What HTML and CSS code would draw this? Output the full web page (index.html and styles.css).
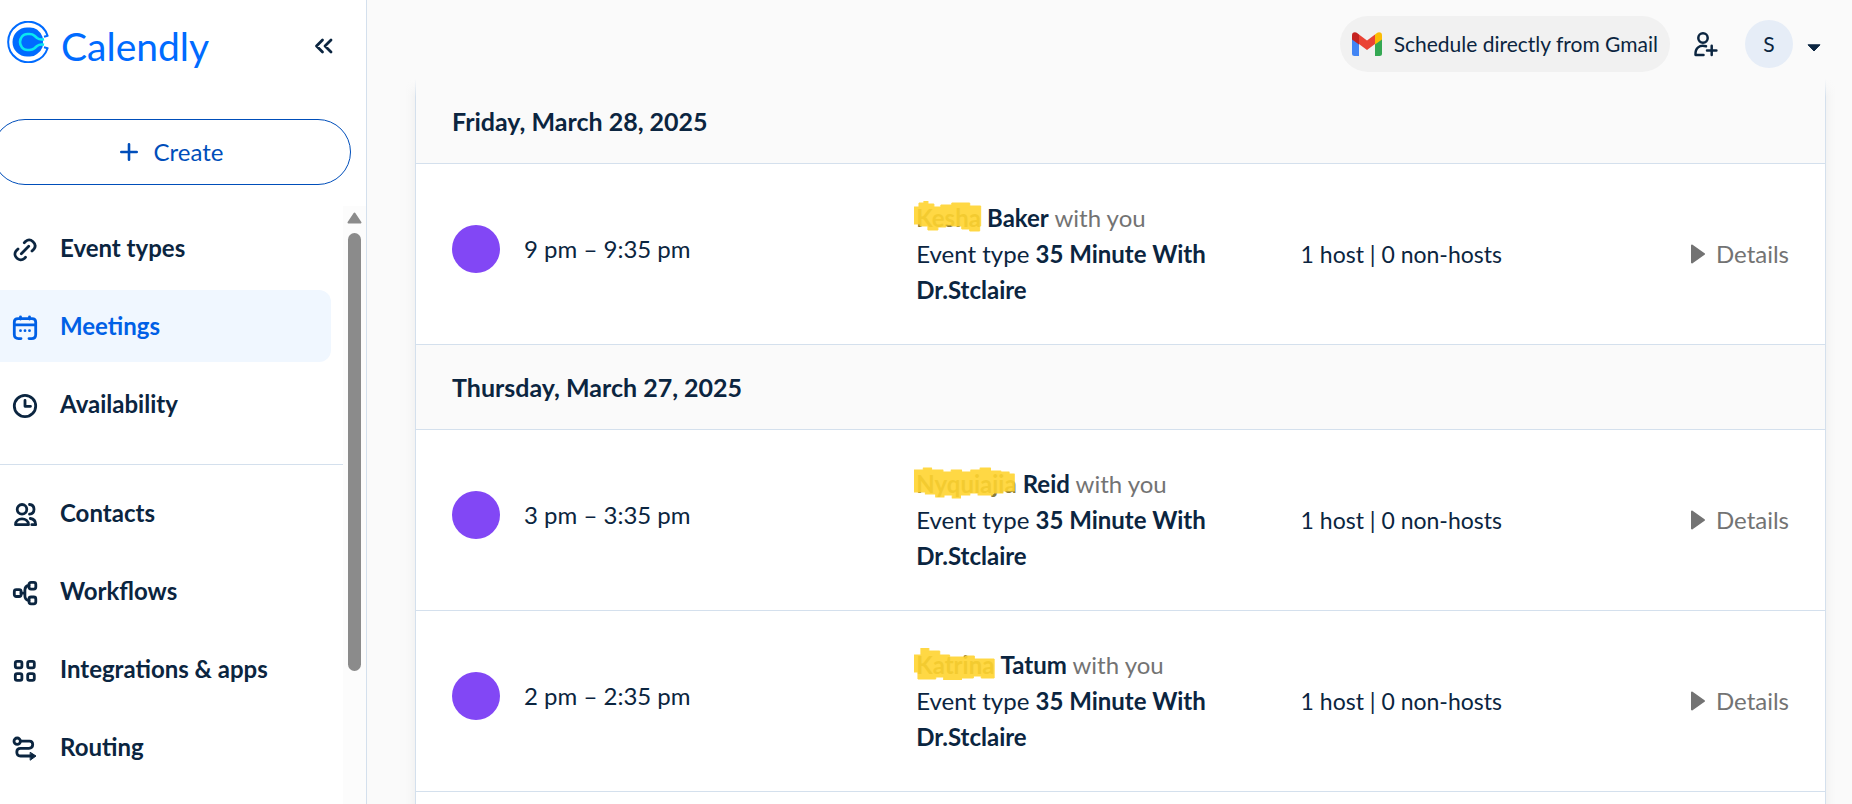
FILE: index.html
```html
<!DOCTYPE html>
<html lang="en">
<head>
<meta charset="utf-8">
<title>Meetings - Calendly</title>
<link rel="stylesheet" href="styles.css">
</head>
<body>
<div class="app">
  <aside class="sidebar">
    <div class="brand">
      <a class="logo" href="#">
        <svg class="logo-mark" viewBox="0 0 42 42" fill="none">
          <path d="M37 15.800L40.600 14.800A20.200 20.200 0 1 0 40.600 27.200L37 26.200" stroke="#006bff" stroke-width="2" stroke-linejoin="round"/>
          <path d="M30 8.500Q34 11.500 35.600 16L36 21L35.600 26Q34 30.500 30 33Q27 35.600 23 35.600H20A14.300 14.300 0 0 1 20 6.600H23Q27 6.600 30 8.500Z" fill="#006bff"/>
          <path d="M37 18.200Q33 19.200 30 17L27.500 14.700Q25.500 13 22.500 13H20.500Q17 13 15 15.500Q13 18 13 21Q13 24 15 26.500Q17 29 20.500 29H22.500Q25.500 29 27.500 27.300L30 25Q33 22.800 37 23.800" stroke="#0ae8f0" stroke-width="2.600"/>
          <path d="M38 21H42" stroke="#fff" stroke-width="3"/>
        </svg>
        <span class="logo-text">Calendly</span>
      </a>
      <button class="icon-button" type="button" aria-label="Collapse sidebar">
        <svg width="20" height="18" viewBox="0 0 20 18" fill="none" stroke="currentColor" stroke-width="2.800" stroke-linecap="round" stroke-linejoin="round"><path d="M8.500 3L2.500 9L8.500 15M17 3L11 9L17 15"/></svg>
      </button>
    </div>
    <button class="create" type="button">
      <svg width="18" height="18" viewBox="0 0 18 18" stroke="currentColor" stroke-width="2.600" stroke-linecap="round"><path d="M9 1.300V16.700M1.300 9H16.700"/></svg>
      Create
    </button>
    <div class="nav-area">
      <nav class="nav">
        <ul class="nav-group">
          <li><a class="nav-item" href="#">
            <svg class="nav-icon" viewBox="0 0 26 26"><path d="M9.300 16.700L16.700 9.300M12.300 5.700L13.700 4.300C18.500 .3 25.700 6.800 22 12L20 14M6 12L4 14C.3 19.200 7.500 25.700 12.300 21.500L13.500 20.300"/></svg>
            Event types</a></li>
          <li><a class="nav-item nav-item-active" href="#" aria-current="page">
            <svg class="nav-icon" viewBox="0 0 26 26"><path d="M9 23.600H6.500Q2.300 23.600 2.300 19.500V7Q2.300 3.600 6 3.600H20Q23.700 3.600 23.700 7V19.500Q23.700 23.600 19.500 23.600H17M2.300 9.800H23.700M8.500 1.800V4M17.500 1.800V4"/><path d="M8.500 15.700H8.510M13 15.700H13.010M17.500 15.700H17.510"/></svg>
            Meetings</a></li>
          <li><a class="nav-item" href="#">
            <svg class="nav-icon" viewBox="0 0 26 26"><circle cx="13" cy="13" r="10.700"/><path d="M13 7.500V13.300H18.500"/></svg>
            Availability</a></li>
        </ul>
        <ul class="nav-group">
          <li><a class="nav-item" href="#">
            <svg class="nav-icon" viewBox="0 0 26 26"><circle cx="10" cy="7.300" r="4.800"/><path d="M3.500 22.700C3.500 14.800 16.500 14.800 16.500 22.700ZM17.500 2.500C23.500 3 23.500 11.500 17.500 12.200M18.300 16.500Q23.600 17 23.700 22.700H19.800"/></svg>
            Contacts</a></li>
          <li><a class="nav-item" href="#">
            <svg class="nav-icon" viewBox="0 0 26 26"><rect x="2.300" y="9.700" width="6.800" height="6.800" rx="2"/><rect x="17" y="2.300" width="6.800" height="6.800" rx="2"/><rect x="17" y="17" width="6.800" height="6.800" rx="2"/><path d="M9 13.100H13M17 5.500Q13 6 12.900 10V16Q13 20 17 20.500"/></svg>
            Workflows</a></li>
          <li><a class="nav-item" href="#">
            <svg class="nav-icon" viewBox="0 0 26 26"><rect x="3.300" y="3.300" width="6.600" height="6.600" rx="1.800"/><rect x="15.700" y="3.300" width="6.600" height="6.600" rx="1.800"/><rect x="3.300" y="15.700" width="6.600" height="6.600" rx="1.800"/><rect x="15.700" y="15.700" width="6.600" height="6.600" rx="1.800"/></svg>
            Integrations &amp; apps</a></li>
          <li><a class="nav-item" href="#">
            <svg class="nav-icon" viewBox="0 0 26 26"><circle cx="5.200" cy="5.200" r="3.200"/><path d="M8.500 5.200H17.500Q20.700 5.200 20.700 8.500Q20.700 12.300 17 12.300H8.500Q4.800 12.300 4.800 16Q4.800 20 8.500 20H18"/><path class="solid" d="M18.500 16.500L24 20L18.500 24Z"/></svg>
            Routing</a></li>
        </ul>
      </nav>
      <div class="scrollbar" aria-hidden="true">
        <svg width="15" height="12" viewBox="0 0 15 12"><path d="M7.500 1.500L13.500 10.500H1.500Z" fill="#8b8b8b" stroke="#8b8b8b" stroke-width="2" stroke-linejoin="round"/></svg>
        <div class="scroll-thumb"></div>
      </div>
    </div>
  </aside>

  <div class="content">
    <header class="topbar">
      <button class="gmail" type="button">
        <svg width="30" height="24" viewBox="0 0 30 24"><path d="M0 6V21.500Q0 24 2.500 24H7V10Z" fill="#4285f4"/><path d="M30 6V21.500Q30 24 27.500 24H23V10Z" fill="#34a853"/><path d="M0 3.500Q0 .3 3 .3Q4.500 .3 7 2.500V12.500L0 7.500Z" fill="#c5221f"/><path d="M30 3.500Q30 .3 27 .3Q25.500 .3 23 2.500V12.500L30 7.500Z" fill="#fbbc04"/><path d="M7 2.500L15 8.500L23 2.500V12L15 18L7 12Z" fill="#ea4335"/></svg>
        Schedule directly from Gmail
      </button>
      <button class="icon-button" type="button" aria-label="Invite user">
        <svg width="26" height="28" viewBox="0 0 26 28" fill="none" stroke="currentColor" stroke-width="2.500" stroke-linejoin="round" stroke-linecap="round"><circle cx="10" cy="8" r="4.700"/><path d="M10.500 25H2.500C2 18 6.500 14.500 13 16.300M18.700 15.700V25M14 20.400H23.400"/></svg>
      </button>
      <button class="account" type="button" aria-label="Account menu">
        <span class="avatar">S</span>
        <svg width="14" height="8" viewBox="0 0 14 8"><path d="M1 .8H13L7 7Z" fill="currentColor" stroke="currentColor" stroke-linejoin="round"/></svg>
      </button>
    </header>

    <main class="meetings">
      <h2 class="day">Friday, March 28, 2025</h2>
      <article class="meeting">
        <div class="when"><span class="dot"></span>9 pm – 9:35 pm</div>
        <div class="event">
          <p><span class="hidden-name">Kesha<svg class="scribble" viewBox="0 0 68 32" preserveAspectRatio="none"><path d="M0 6H5V2H10V0H14V3H20V6H27V4H38V2H56V5H67V25H66V30H56V28H48V25H38V24H32V26H24V29H14V25H6V23H0Z"/></svg></span> <b>Baker</b> <span class="muted">with you</span></p>
          <p>Event type <b>35 Minute With Dr.Stclaire</b></p>
        </div>
        <div class="people">1 host | 0 non-hosts</div>
        <button class="details" type="button"><svg width="16" height="22" viewBox="0 0 16 22"><path d="M2 2.500L14 11L2 19.500Z"/></svg>Details</button>
      </article>

      <h2 class="day">Thursday, March 27, 2025</h2>
      <article class="meeting">
        <div class="when"><span class="dot"></span>3 pm – 3:35 pm</div>
        <div class="event">
          <p><span class="hidden-name">Nyquiajia<svg class="scribble" viewBox="0 0 100 32" preserveAspectRatio="none"><path d="M0 3H9V1H17V3H28V5H36V3H46V5H55V3H64V1H74V4H84V5H92V7H97V24H86V26H76V28H62V26H54V28H45V31H37V28H29V30H21V27H11V25H0Z"/></svg></span> <b>Reid</b> <span class="muted">with you</span></p>
          <p>Event type <b>35 Minute With Dr.Stclaire</b></p>
        </div>
        <div class="people">1 host | 0 non-hosts</div>
        <button class="details" type="button"><svg width="16" height="22" viewBox="0 0 16 22"><path d="M2 2.500L14 11L2 19.500Z"/></svg>Details</button>
      </article>
      <article class="meeting">
        <div class="when"><span class="dot"></span>2 pm – 2:35 pm</div>
        <div class="event">
          <p><span class="hidden-name">Katrina<svg class="scribble" viewBox="0 0 82 32" preserveAspectRatio="none"><path d="M0 7H7V0H15V3H26V7H36V9H52V8H61V11H81V30H68V28H60V30H48V32H30V29H22V31H4V24H0Z"/></svg></span> <b>Tatum</b> <span class="muted">with you</span></p>
          <p>Event type <b>35 Minute With Dr.Stclaire</b></p>
        </div>
        <div class="people">1 host | 0 non-hosts</div>
        <button class="details" type="button"><svg width="16" height="22" viewBox="0 0 16 22"><path d="M2 2.500L14 11L2 19.500Z"/></svg>Details</button>
      </article>
    </main>
  </div>
</div>
</body>
</html>
```

FILE: styles.css
```css
* { box-sizing: border-box; }

body {
  margin: 0;
  background: #fafafa;
  color: #0b2540;
  font: 24px/36px Lato, "Liberation Sans", sans-serif;
}

button {
  border: 0;
  padding: 0;
  background: none;
  color: inherit;
  font: inherit;
  display: flex;
  align-items: center;
}

a { color: inherit; text-decoration: none; }
p, h2, ul { margin: 0; padding: 0; }
ul { list-style: none; }
svg { flex: none; }

.app {
  display: flex;
  height: 100vh;
  overflow: hidden;
}

/* Sidebar */
.sidebar {
  flex: none;
  width: 367px;
  display: flex;
  flex-direction: column;
  background: #fff;
  border-right: 1px solid #d4e0ed;
}

.brand {
  display: flex;
  align-items: center;
  justify-content: space-between;
  height: 91px;
  padding: 0 32px 0 7px;
}

.logo {
  display: flex;
  align-items: flex-start;
  gap: 12px;
  color: #006bff;
}

.logo-mark { width: 42px; height: 42px; }
.logo-text { font-size: 39px; line-height: 50px; }

.create {
  flex: none;
  justify-content: center;
  gap: 16px;
  height: 66px;
  margin: 28px 15px 21px -8px;
  border: 1px solid #004eba;
  border-radius: 33px;
  color: #004eba;
}

.nav-area {
  flex: 1;
  min-height: 0;
  display: flex;
}

.nav { flex: 1; overflow: hidden; }

.nav-group {
  display: grid;
  gap: 6px;
  padding: 6px 12px 24px 0;
}

.nav-group + .nav-group {
  border-top: 1px solid #d4e0ed;
  padding-top: 12px;
}

.nav-item {
  display: flex;
  align-items: center;
  gap: 22px;
  height: 72px;
  padding-left: 12px;
  border-radius: 0 12px 12px 0;
  font-weight: 700;
}

.nav-item-active { background: #f0f7ff; color: #0060e6; }

.nav-icon {
  width: 26px;
  height: 26px;
  margin-top: 4px;
  fill: none;
  stroke: currentColor;
  stroke-width: 2.8;
  stroke-linecap: round;
  stroke-linejoin: round;
}

.nav-icon .solid { fill: currentColor; stroke-width: 1; }

.scrollbar {
  width: 23px;
  padding-top: 6px;
  display: flex;
  flex-direction: column;
  align-items: center;
  gap: 9px;
  background: #fcfcfc;
}

.scroll-thumb {
  width: 13px;
  height: 74%;
  border-radius: 7px;
  background: #8b8b8b;
}

/* Main column */
.content {
  flex: 1;
  min-width: 0;
}

.topbar {
  position: relative;
  z-index: 1;
  display: flex;
  align-items: center;
  justify-content: flex-end;
  height: 79px;
  padding: 9px 31px 0 0;
  background: #fafafa;
}

.topbar::after {
  content: "";
  position: absolute;
  left: 0;
  right: 0;
  top: 100%;
  height: 18px;
  background: linear-gradient(#fafafa, #fafafa00);
}

.gmail {
  gap: 12px;
  height: 56px;
  padding: 0 12px;
  margin-right: 23px;
  border-radius: 28px;
  background: #f1f1f1;
  font-size: 21px;
}

.account { gap: 14px; margin-left: 26px; }

.avatar {
  width: 48px;
  height: 48px;
  border-radius: 50%;
  background: #e6edf7;
  font-size: 21px;
  line-height: 48px;
}

.account svg { margin-top: 8px; }

.meetings {
  height: 100%;
  margin: 0 26px 0 48px;
  border: 1px solid #d4e0ed;
  border-width: 0 1px;
  background: #fff;
  box-shadow: 0 2px 12px #0000000f;
}

.day {
  padding: 24px 36px;
  border-bottom: 1px solid #d4e0ed;
  background: #fafafa;
  font-size: 25px;
  line-height: 36px;
}

.meeting {
  display: grid;
  grid-template-columns: 465fr 385fr 390fr auto;
  align-items: center;
  padding: 36px;
  border-bottom: 1px solid #d4e0ed;
}

.when {
  display: flex;
  align-items: center;
  gap: 24px;
  padding-bottom: 10px;
}

.dot {
  width: 48px;
  height: 48px;
  border-radius: 50%;
  background: #8247f5;
}

.event { max-width: 310px; }
.people { font-size: 23px; }
.muted, .details { color: #737373; }

.hidden-name {
  position: relative;
  font-weight: 700;
  color: #8a7a3a;
}

.scribble {
  position: absolute;
  left: -2px;
  top: -2px;
  width: calc(100% + 3px);
  height: 32px;
  fill: #ffd430;
  stroke: #ffd430;
  stroke-width: 1;
  stroke-linejoin: round;
  opacity: .9;
}

.details { gap: 10px; }

.details svg {
  fill: #737373;
  stroke: #737373;
  stroke-width: 2;
  stroke-linejoin: round;
}
```
